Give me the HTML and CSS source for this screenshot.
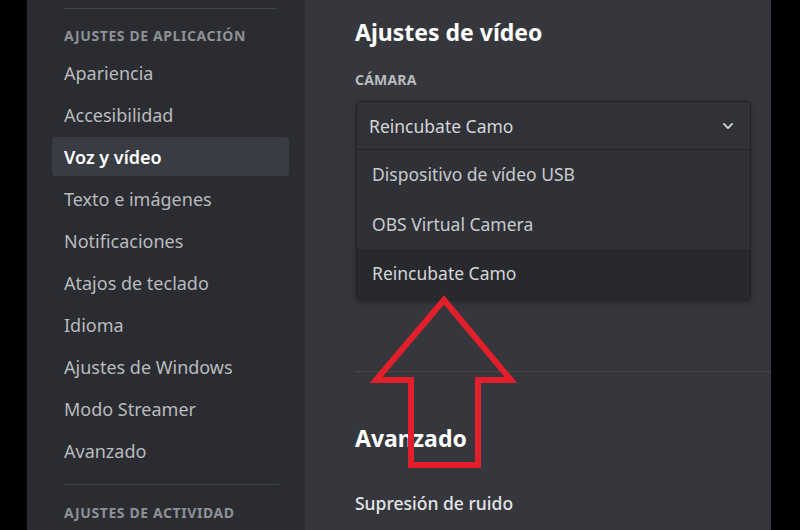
FILE: index.html
```html
<!DOCTYPE html>
<html lang="es">
<head>
    <meta charset="UTF-8">
    <meta name="viewport" content="width=device-width, initial-scale=1.0">
    <title>Ajustes de vídeo</title>
    <link rel="stylesheet" href="styles.css">
</head>

<body>
    <div class="app">
        <div class="gutter-left"></div>

        <nav class="sidebar">
            <div class="divider top"></div>
            <h3 class="section-title">Ajustes de aplicación</h3>
            <a class="nav-item">Apariencia</a>
            <a class="nav-item">Accesibilidad</a>
            <a class="nav-item selected">Voz y vídeo</a>
            <a class="nav-item">Texto e imágenes</a>
            <a class="nav-item">Notificaciones</a>
            <a class="nav-item">Atajos de teclado</a>
            <a class="nav-item">Idioma</a>
            <a class="nav-item">Ajustes de Windows</a>
            <a class="nav-item">Modo Streamer</a>
            <a class="nav-item">Avanzado</a>
            <div class="divider bottom"></div>
            <h3 class="section-title">Ajustes de actividad</h3>
        </nav>

        <main class="content">
            <h2 class="heading">Ajustes de vídeo</h2>
            <h5 class="field-label">Cámara</h5>

            <div class="select">
                <div class="select-value">
                    <span>Reincubate Camo</span>
                    <svg class="chevron" width="14" height="14" viewBox="0 0 24 24">
                        <path d="M5 8.5l7 7 7-7" fill="none" stroke="#d4d6d9" stroke-width="3.2" stroke-linecap="round" stroke-linejoin="round"/>
                    </svg>
                </div>
                <div class="select-menu">
                    <div class="option">Dispositivo de vídeo USB</div>
                    <div class="option">OBS Virtual Camera</div>
                    <div class="option active">Reincubate Camo</div>
                </div>
            </div>

            <div class="divider wide"></div>

            <h2 class="heading">Avanzado</h2>
            <h4 class="sub-heading">Supresión de ruido</h4>

            <!-- red arrow pointing at the selected camera -->
            <svg class="arrow" width="170" height="190" viewBox="0 0 170 190">
                <polygon points="84,10 151,90 118,90 118,175 51,175 51,90 16,90" fill="none" stroke="#e21f2b" stroke-width="6" stroke-linejoin="miter"/>
            </svg>
        </main>

        <div class="gutter-right"></div>
    </div>
</body>
</html>
```

FILE: styles.css
```css
body {
    margin: 0;
    padding: 0;
    background-color: #000;
    font-family: 'Noto Sans', 'Open Sans', sans-serif;
}

.app {
    display: flex;
    width: 800px;
    height: 530px;
    overflow: hidden;
}

.gutter-left {
    width: 27px;
    background-color: #000;
}

.gutter-right {
    flex: 1;
    background-color: #000;
}

/* Sidebar */
.sidebar {
    width: 237px;
    padding: 8px 16px 0 25px;
    background-color: #2b2c31;
    display: flex;
    flex-direction: column;
}

.divider {
    height: 1px;
    flex-shrink: 0;
    background-color: #41434a;
}

.divider.top {
    margin: 0 12px;
}

.divider.bottom {
    margin: 11px 10px 0 12px;
}

.section-title {
    margin: 0;
    padding: 0 12px;
    height: 44px;
    line-height: 54px;
    font-size: 14px;
    font-weight: 700;
    letter-spacing: 0.6px;
    text-transform: uppercase;
    color: #8e9196;
    white-space: nowrap;
}

.divider.bottom + .section-title {
    line-height: 56px;
}

.nav-item {
    display: block;
    height: 39px;
    line-height: 40px;
    margin-bottom: 3px;
    padding: 0 12px;
    border-radius: 4px;
    font-size: 18px;
    color: #b9bbbe;
}

.nav-item.selected {
    background-color: #3a3c43;
    color: #fff;
    font-weight: 600;
}

/* Main content */
.content {
    position: relative;
    width: 416px;
    padding: 15px 0 0 50px;
    background-color: #35373d;
}

.heading {
    margin: 0;
    font-size: 23px;
    line-height: 34px;
    font-weight: 700;
    color: #fff;
}

.field-label {
    margin: 19px 0 0;
    font-size: 14px;
    line-height: 24px;
    font-weight: 700;
    letter-spacing: 0.2px;
    text-transform: uppercase;
    color: #b9bbbe;
}

.select {
    margin-top: 9px;
    width: 393px;
    margin-left: 1px;
    border: 1px solid #202226;
    border-radius: 4px;
    background-color: #2f3136;
    overflow: hidden;
    box-shadow: 0 2px 6px rgba(0, 0, 0, 0.3);
}

.select-value {
    display: flex;
    align-items: center;
    justify-content: space-between;
    height: 47px;
    padding: 0 15px 0 12px;
    border-bottom: 1px solid #202226;
    background-color: #303237;
    font-size: 17.5px;
    color: #d4d6d9;
}

.option {
    height: 49.5px;
    line-height: 49px;
    padding: 0 15px;
    font-size: 17.5px;
    color: #c8cacd;
}

.option.active {
    background-color: #28292d;
    color: #d4d6d9;
}

.divider.wide {
    margin: 71px 0 0;
    background-color: #44464c;
}

.divider.wide + .heading {
    margin-top: 49px;
}

.sub-heading {
    margin: 37px 0 0;
    font-size: 17.5px;
    line-height: 22px;
    font-weight: 500;
    color: #e3e5e8;
}

.arrow {
    position: absolute;
    left: 55px;
    top: 290px;
}
```
